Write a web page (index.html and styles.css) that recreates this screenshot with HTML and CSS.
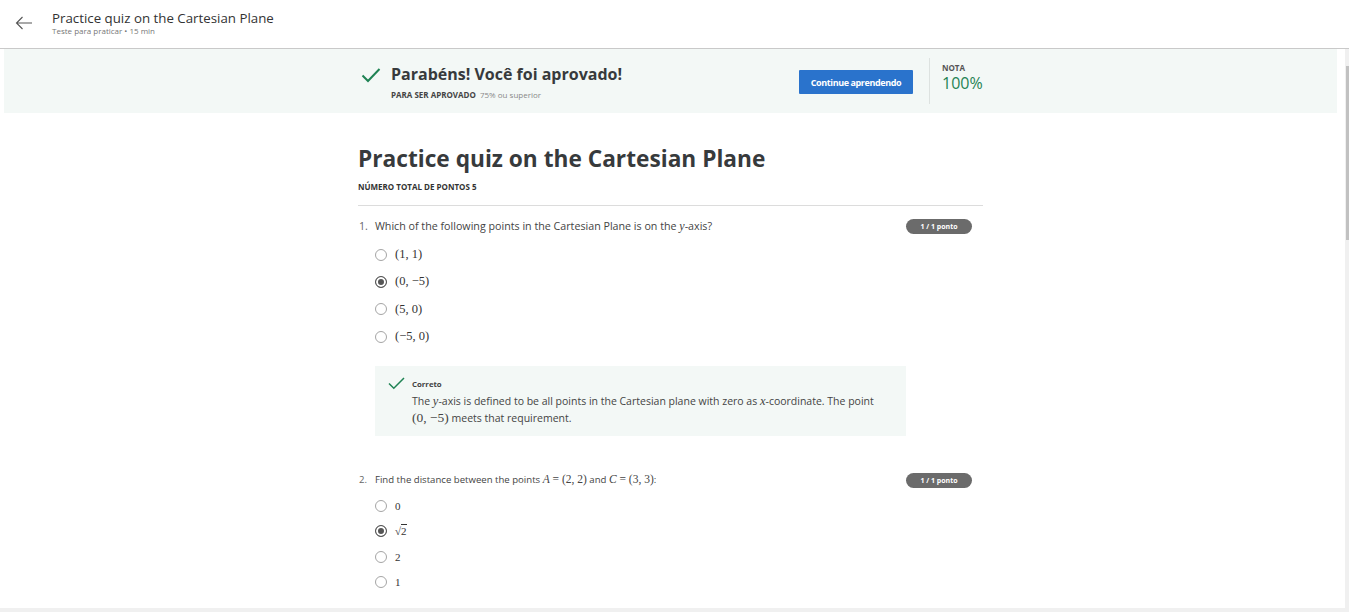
FILE: index.html
```html
<!DOCTYPE html>
<html lang="pt">
<head>
<meta charset="utf-8">
<title>Practice quiz on the Cartesian Plane</title>
<link rel="stylesheet" href="styles.css">
</head>
<body>
<header class="topbar">
  <button class="back" aria-label="Voltar">
    <svg width="18" height="14" viewBox="0 0 18 14"><path d="M17 7H1.5M7.5 1L1.5 7l6 6" fill="none" stroke="#555" stroke-width="1.1"/></svg>
  </button>
  <div class="top-titles">
    <div class="top-title">Practice quiz on the Cartesian Plane</div>
    <div class="top-sub">Teste para praticar • 15 min</div>
  </div>
</header>
<div class="viewport">
<main class="scroller">
  <section class="banner">
    <div class="banner-inner">
      <div class="pass">
        <svg class="pass-check" width="20" height="16" viewBox="0 0 20 16"><path d="M1.5 8.5l5.5 5.5L18.5 2" fill="none" stroke="#1f8354" stroke-width="2"/></svg>
        <div>
          <div class="pass-title">Parabéns! Você foi aprovado!</div>
          <div class="pass-sub"><b>PARA SER APROVADO</b> 75% ou superior</div>
        </div>
      </div>
      <button class="continue">Continue aprendendo</button>
      <div class="divider"></div>
      <div class="grade">
        <div class="grade-label">NOTA</div>
        <div class="grade-value">100%</div>
      </div>
    </div>
  </section>

  <section class="quiz">
    <h1 class="quiz-title">Practice quiz on the Cartesian Plane</h1>
    <div class="total">NÚMERO TOTAL DE PONTOS 5</div>

    <div class="question q1">
      <div class="q-head">
        <span class="q-num">1.</span>
        <span class="q-text">Which of the following points in the Cartesian Plane is on the <i class="m">y</i>-axis?</span>
        <span class="badge">1 / 1 ponto</span>
      </div>
      <ul class="options">
        <li><span class="radio"></span><span class="m">(1, 1)</span></li>
        <li><span class="radio on"></span><span class="m">(0, −5)</span></li>
        <li><span class="radio"></span><span class="m">(5, 0)</span></li>
        <li><span class="radio"></span><span class="m">(−5, 0)</span></li>
      </ul>
      <div class="feedback">
        <svg class="fb-check" width="17" height="13" viewBox="0 0 17 13"><path d="M1 6.5l4.8 4.8L16 1" fill="none" stroke="#1f8354" stroke-width="1.5"/></svg>
        <div>
          <div class="fb-label">Correto</div>
          <p class="fb-text">The <i class="m">y</i>-axis is defined to be all points in the Cartesian plane with zero as <i class="m">x</i>-coordinate. The point <span class="m big">(0, −5)</span> meets that requirement.</p>
        </div>
      </div>
    </div>

    <div class="question q2">
      <div class="q-head">
        <span class="q-num">2.</span>
        <span class="q-text">Find the distance between the points <span class="m"><i>A</i> = (2, 2)</span> and <span class="m"><i>C</i> = (3, 3)</span>:</span>
        <span class="badge">1 / 1 ponto</span>
      </div>
      <ul class="options tight">
        <li><span class="radio"></span><span class="m sm">0</span></li>
        <li><span class="radio on"></span><span class="m sm">√<span class="ov">2</span></span></li>
        <li><span class="radio"></span><span class="m sm">2</span></li>
        <li><span class="radio"></span><span class="m sm">1</span></li>
      </ul>
    </div>
  </section>
</main>
<div class="vscroll"><div class="vthumb"></div></div>
</div>
<div class="hscroll"></div>
</body>
</html>
```

FILE: styles.css
```css
* { box-sizing: border-box; }
html, body { margin: 0; height: 100%; }
body {
  font-family: "Open Sans", "Noto Sans", sans-serif;
  color: #373a3c;
  background: #fff;
  display: flex;
  flex-direction: column;
  overflow: hidden;
}
.topbar {
  height: 49px;
  flex: none;
  display: flex;
  align-items: flex-start;
  border-bottom: 1px solid #c9c9c9;
  padding: 10px 0 0 15px;
}
.back {
  border: 0;
  background: none;
  padding: 0;
  width: 18px;
  height: 14px;
  margin-top: 6px;
  margin-right: 19px;
  display: flex;
}
.top-title { font-size: 13.3px; line-height: 16px; color: #333; }
.top-sub { font-size: 8px; line-height: 10px; color: #777; margin-top: 0; }

.viewport {
  flex: 1;
  min-height: 0;
  display: flex;
}
.scroller {
  flex: 1;
  min-width: 0;
  overflow: hidden;
  padding: 0 8px 0 4px;
}
.vscroll {
  width: 4px;
  flex: none;
  background: #f0f0f0;
  padding: 17px 0 0 1px;
}
.vthumb { height: 174px; background: #c1c1c1; }
.hscroll { height: 4px; flex: none; background: #f0f0f0; }

.banner {
  background: #f3f8f6;
  height: 64px;
  display: flex;
  justify-content: center;
}
.banner-inner {
  width: 625px;
  display: flex;
  align-items: center;
}
.pass {
  flex: 1;
  display: flex;
  align-items: flex-start;
  padding-left: 3px;
}
.pass-check { margin-top: 4px; margin-right: 10px; flex: none; }
.pass-title { font-size: 16px; font-weight: 700; line-height: 22px; color: #373a3c; }
.pass-sub { font-size: 8px; line-height: 10px; color: #888; margin-top: 5px; }
.pass-sub b { color: #444; margin-right: 2px; }
.continue {
  width: 114px;
  height: 24px;
  border: 0;
  border-radius: 1px;
  background: #2a73cc;
  color: #fff;
  font-family: "Open Sans", sans-serif;
  font-size: 9px;
  font-weight: 700;
  letter-spacing: -0.4px;
  padding: 0;
  margin-top: 2px;
}
.divider {
  width: 1px;
  height: 46px;
  background: #dde2e0;
  margin-left: 16px;
  margin-right: 12px;
}
.grade { flex: none; width: 41px; align-self: flex-start; padding-top: 14px; }
.grade-label { font-size: 8px; font-weight: 700; line-height: 10px; color: #555; }
.grade-value { font-size: 16px; line-height: 20px; color: #1f8354; }

.quiz {
  width: 625px;
  margin: 0 auto;
  padding: 30px 0 0;
}
.quiz-title {
  font-size: 22.7px;
  font-weight: 700;
  line-height: 32px;
  margin: 0;
  color: #373a3c;
}
.total {
  font-size: 8px;
  font-weight: 700;
  line-height: 10px;
  margin-top: 7px;
  padding-bottom: 13px;
  border-bottom: 1px solid #dcdcdc;
  color: #333;
}
.question { padding-top: 12px; }
.q2 { padding-top: 36px; }
.q-head {
  display: flex;
  align-items: center;
  font-size: 10.7px;
  line-height: 16px;
  color: #444;
}
.q2 .q-head { font-size: 9.6px; }
.q-num { width: 17px; padding-left: 1px; color: #666; }
.q-text { flex: 1; }
.badge {
  width: 66px;
  height: 15px;
  border-radius: 8px;
  background: #6b6b6b;
  color: #fff;
  font-size: 7px;
  font-weight: 700;
  line-height: 15px;
  text-align: center;
  margin-right: 11px;
}
.m { font-family: "Liberation Serif", "DejaVu Serif", serif; font-size: 12.5px; }
i.m, .m i { font-style: italic; }
.q-text .m { font-size: 12px; line-height: 1; }
.q2 .q-text .m { font-size: 11.5px; }
.options { list-style: none; margin: 7px 0 0; padding: 0 0 0 17px; }
.options li {
  display: flex;
  align-items: center;
  height: 27.3px;
  color: #333;
}
.options.tight { margin-top: 5px; }
.options.tight li { height: 25.5px; }
.radio {
  width: 12px;
  height: 12px;
  border-radius: 50%;
  border: 1px solid #a5a5a5;
  margin-right: 8px;
  flex: none;
  background: #fff;
}
.radio.on {
  border: 1.5px solid #555;
  background: #555;
  box-shadow: inset 0 0 0 2px #fff;
}
.m.sm { font-size: 11px; }
.ov { border-top: 1px solid #333; }
.feedback {
  margin: 16px 0 0 17px;
  width: 531px;
  background: #f3f8f6;
  display: flex;
  padding: 11px 18px 9px 13px;
}
.fb-check { flex: none; margin-right: 7px; }
.fb-label { font-size: 7.8px; font-weight: 700; line-height: 12px; color: #444; margin-top: 1px; }
.fb-text { margin: 3px 0 0; font-size: 10.5px; line-height: 17px; color: #444; }
.fb-text .m { line-height: 1; }
.fb-text .m.big { font-size: 13.5px; }
```
